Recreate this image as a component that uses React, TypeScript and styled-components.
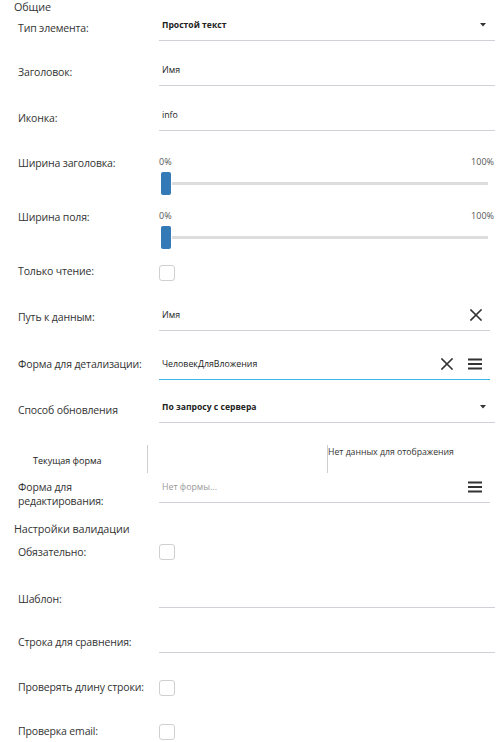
import React from "react";
import styled, { createGlobalStyle } from "styled-components";

const Global = createGlobalStyle`
  html, body { margin: 0; padding: 0; background: #fff; }
  body { font-family: "Open Sans", "Noto Sans", sans-serif; color: #333; }
  * { box-sizing: border-box; }
`;

const Page = styled.div`
  width: 501px;
  height: 742px;
  overflow: hidden;
  background: #fff;
`;

const SectionTitle = styled.div<{ $mt: number }>`
  margin-top: ${(p) => p.$mt}px;
  padding-left: 14px;
  height: 14px;
  font-size: 10.8px;
  line-height: 14px;
  letter-spacing: -0.1px;
  color: #333;
`;

const Row = styled.div<{ $mt: number; $h: number }>`
  display: grid;
  grid-template-columns: 141px 1fr;
  padding-left: 18px;
  margin-top: ${(p) => p.$mt}px;
  height: ${(p) => p.$h}px;
`;

const Label = styled.div<{ $pt: number }>`
  padding-top: ${(p) => p.$pt}px;
  font-size: 10.5px;
  line-height: 14px;
  letter-spacing: -0.15px;
  color: #333;
`;

const Field = styled.div<{ $mr?: number }>`
  height: 31px;
  margin-right: ${(p) => p.$mr ?? 6}px;
  border-bottom: 1px solid #cfd2d6;
  display: flex;
  align-items: center;
  padding-left: 3px;
  padding-right: 8px;
  gap: 15px;
`;

const ActiveField = styled(Field)`
  border-bottom: 1px solid #3ab7e8;
`;

const Value = styled.span<{ $bold?: boolean; $placeholder?: boolean }>`
  flex: 1;
  font-size: ${(p) => (p.$bold ? 8.6 : 8.8)}px;
  font-weight: ${(p) => (p.$bold ? 700 : 400)};
  color: ${(p) => (p.$placeholder ? "#999" : "#222")};
  white-space: nowrap;
`;

const Caret = styled.svg`
  width: 6px;
  height: 4px;
  margin-right: 1px;
  flex: none;
`;

const IconSvg = styled.svg`
  flex: none;
  display: block;
`;

const SliderBox = styled.div`
  margin-right: 7px;
  display: flex;
  flex-direction: column;
`;

const SliderScale = styled.div`
  display: flex;
  justify-content: space-between;
  height: 14px;
  font-size: 9px;
  line-height: 14px;
  color: #555;
`;

const SliderTrackRow = styled.div`
  margin-top: 2px;
  height: 24px;
  display: flex;
  align-items: center;
  padding-left: 2px;
  padding-right: 6px;
`;

const Thumb = styled.div`
  width: 10px;
  height: 23px;
  border-radius: 2px;
  background: #337ab7;
  flex: none;
`;

const Track = styled.div`
  flex: 1;
  height: 3px;
  margin-left: 1px;
  background: #dddddd;
`;

const Check = styled.div`
  margin-top: 1px;
  width: 16px;
  height: 16px;
  border: 1px solid #d0d0d0;
  border-radius: 3px;
  background: #fff;
`;

const FormBlock = styled.div`
  margin-top: 22px;
  height: 28px;
  display: grid;
  grid-template-columns: 147px 180px 1fr;
`;

const FormCell = styled.div<{ $border?: boolean }>`
  border-left: ${(p) => (p.$border ? "1px solid #cfcfcf" : "none")};
`;

const CurrentForm = styled(FormCell)`
  display: flex;
  align-items: center;
  padding-left: 33px;
  padding-top: 2px;
  font-size: 9px;
  color: #222;
`;

const NoData = styled(FormCell)`
  font-size: 8.7px;
  line-height: 14px;
  color: #333;
`;

const XIcon = () => (
  <IconSvg width={12} height={12} viewBox="0 0 12 12">
    <path d="M1 1 L11 11 M11 1 L1 11" stroke="#333" strokeWidth="1.6" strokeLinecap="square" />
  </IconSvg>
);

const MenuIcon = () => (
  <IconSvg width={14} height={12} viewBox="0 0 14 12">
    <rect x="0" y="0.5" width="14" height="2" fill="#333" />
    <rect x="0" y="5" width="14" height="2" fill="#333" />
    <rect x="0" y="9.5" width="14" height="2" fill="#333" />
  </IconSvg>
);

const Dropdown = () => (
  <Caret viewBox="0 0 6 4">
    <path d="M0 0 H6 L3 3.5 Z" fill="#333" />
  </Caret>
);

const Slider = () => (
  <SliderBox>
    <SliderScale>
      <span>0%</span>
      <span>100%</span>
    </SliderScale>
    <SliderTrackRow>
      <Thumb />
      <Track />
    </SliderTrackRow>
  </SliderBox>
);

export default function App() {
  return (
    <Page>
      <Global />
      <SectionTitle $mt={0}>Общие</SectionTitle>

      <Row $mt={-4} $h={31}>
        <Label $pt={11}>Тип элемента:</Label>
        <Field>
          <Value $bold>Простой текст</Value>
          <Dropdown />
        </Field>
      </Row>

      <Row $mt={14} $h={31}>
        <Label $pt={10}>Заголовок:</Label>
        <Field>
          <Value>Имя</Value>
        </Field>
      </Row>

      <Row $mt={14} $h={31}>
        <Label $pt={11}>Иконка:</Label>
        <Field>
          <Value>info</Value>
        </Field>
      </Row>

      <Row $mt={24} $h={40}>
        <Label $pt={1}>Ширина заголовка:</Label>
        <Slider />
      </Row>

      <Row $mt={14} $h={40}>
        <Label $pt={1}>Ширина поля:</Label>
        <Slider />
      </Row>

      <Row $mt={15} $h={18}>
        <Label $pt={0}>Только чтение:</Label>
        <Check />
      </Row>

      <Row $mt={18} $h={31}>
        <Label $pt={10}>Путь к данным:</Label>
        <Field $mr={11}>
          <Value>Имя</Value>
          <XIcon />
        </Field>
      </Row>

      <Row $mt={18} $h={31}>
        <Label $pt={8}>Форма для детализации:</Label>
        <ActiveField $mr={11}>
          <Value>ЧеловекДляВложения</Value>
          <XIcon />
          <MenuIcon />
        </ActiveField>
      </Row>

      <Row $mt={12} $h={31}>
        <Label $pt={11}>Способ обновления</Label>
        <Field>
          <Value $bold>По запросу с сервера</Value>
          <Dropdown />
        </Field>
      </Row>

      <FormBlock>
        <CurrentForm>Текущая форма</CurrentForm>
        <FormCell $border />
        <NoData $border>Нет данных для отображения</NoData>
      </FormBlock>

      <Row $mt={-1} $h={31}>
        <Label $pt={8}>
          Форма для
          <br />
          редактирования:
        </Label>
        <Field $mr={11}>
          <Value $placeholder>Нет формы...</Value>
          <MenuIcon />
        </Field>
      </Row>

      <SectionTitle $mt={19}>Настройки валидации</SectionTitle>

      <Row $mt={7} $h={18}>
        <Label $pt={2}>Обязательно:</Label>
        <Check />
      </Row>

      <Row $mt={16} $h={31}>
        <Label $pt={15}>Шаблон:</Label>
        <Field>
          <Value />
        </Field>
      </Row>

      <Row $mt={14} $h={31}>
        <Label $pt={13}>Строка для сравнения:</Label>
        <Field>
          <Value />
        </Field>
      </Row>

      <Row $mt={26} $h={18}>
        <Label $pt={1}>Проверять длину строки:</Label>
        <Check />
      </Row>

      <Row $mt={26} $h={18}>
        <Label $pt={1}>Проверка email:</Label>
        <Check />
      </Row>
    </Page>
  );
}
